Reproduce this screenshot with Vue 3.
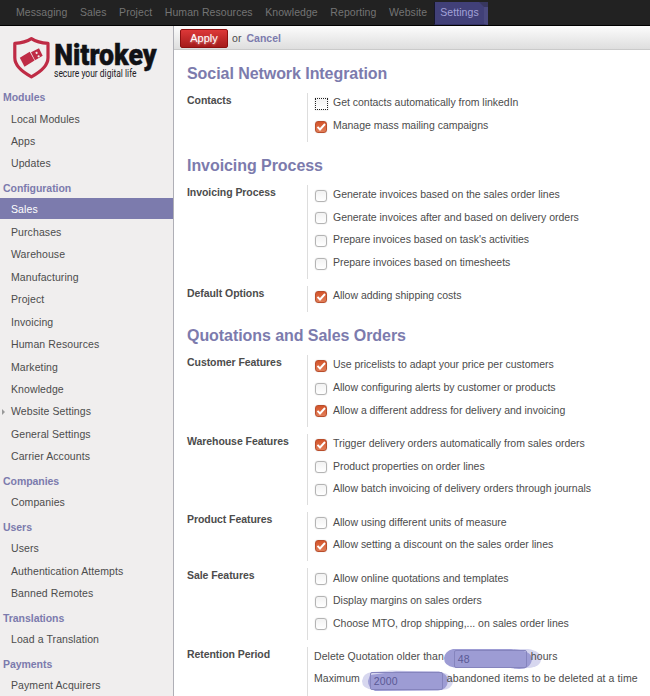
<script setup>
const topMenu = [
  { t: 'Messaging' }, { t: 'Sales' }, { t: 'Project' }, { t: 'Human Resources' },
  { t: 'Knowledge' }, { t: 'Reporting' }, { t: 'Website' },
]
const side = [
  { title: 'Modules', items: ['Local Modules', 'Apps', 'Updates'] },
  { title: 'Configuration', items: ['Sales', 'Purchases', 'Warehouse', 'Manufacturing', 'Project', 'Invoicing', 'Human Resources', 'Marketing', 'Knowledge', 'Website Settings', 'General Settings', 'Carrier Accounts'] },
  { title: 'Companies', items: ['Companies'] },
  { title: 'Users', items: ['Users', 'Authentication Attempts', 'Banned Remotes'] },
  { title: 'Translations', items: ['Load a Translation'] },
  { title: 'Payments', items: ['Payment Acquirers'] },
]
const sections = [
  { title: 'Social Network Integration', groups: [
    { label: 'Contacts', rows: [
      { t: 'Get contacts automatically from linkedIn', focus: true },
      { t: 'Manage mass mailing campaigns', on: true },
    ] },
  ] },
  { title: 'Invoicing Process', groups: [
    { label: 'Invoicing Process', rows: [
      { t: 'Generate invoices based on the sales order lines' },
      { t: 'Generate invoices after and based on delivery orders' },
      { t: "Prepare invoices based on task's activities" },
      { t: 'Prepare invoices based on timesheets' },
    ] },
    { label: 'Default Options', rows: [{ t: 'Allow adding shipping costs', on: true }] },
  ] },
  { title: 'Quotations and Sales Orders', groups: [
    { label: 'Customer Features', rows: [
      { t: 'Use pricelists to adapt your price per customers', on: true },
      { t: 'Allow configuring alerts by customer or products' },
      { t: 'Allow a different address for delivery and invoicing', on: true },
    ] },
    { label: 'Warehouse Features', rows: [
      { t: 'Trigger delivery orders automatically from sales orders', on: true },
      { t: 'Product properties on order lines' },
      { t: 'Allow batch invoicing of delivery orders through journals' },
    ] },
    { label: 'Product Features', rows: [
      { t: 'Allow using different units of measure' },
      { t: 'Allow setting a discount on the sales order lines', on: true },
    ] },
    { label: 'Sale Features', rows: [
      { t: 'Allow online quotations and templates' },
      { t: 'Display margins on sales orders' },
      { t: 'Choose MTO, drop shipping,... on sales order lines' },
    ] },
    { label: 'Retention Period', rows: [
      { pre: 'Delete Quotation older than', value: '48', post: 'hours', kind: 'hours' },
      { pre: 'Maximum', value: '2000', post: 'abandoned items to be deleted at a time', kind: 'items' },
    ] },
  ] },
]
</script>

<template>
  <div class="page">
    <nav class="topbar">
      <a v-for="m in topMenu" :key="m.t">{{ m.t }}</a>
      <a class="current">Settings
        <svg class="fold" width="9" height="5" viewBox="0 0 9 5"><path d="M0 0H9V5H5Z" fill="#38375f" /></svg>
      </a>
    </nav>
    <div class="body">
      <aside class="sidebar">
        <svg class="logo" width="173" height="61" viewBox="0 0 173 61">
          <path d="M31.400 12.600C26.500 15.800 20.500 17 14.800 17.400V31.800C14.800 39.800 22 45.800 31.400 50.800C40.800 45.800 48 39.800 48 31.800V17.400C42.300 17 36.300 15.800 31.400 12.600Z" fill="none" stroke="#bf2b45" stroke-width="3.200" stroke-linejoin="round" />
          <path d="M19.800 31.700L29.700 25.800L34.500 34.500L24.500 40.800Z" fill="#bf2b45" />
          <path fill-rule="evenodd" d="M31 26.300L39 22.300L42.700 29.800L35 34.200ZM35.300 26.500L37 25.600L37.900 27.300L36.200 28.200ZM37.300 29.900L39 29L39.900 30.500L38.200 31.400Z" fill="#bf2b45" />
          <text x="54.200" y="39" class="brand" textLength="102.500" lengthAdjust="spacingAndGlyphs">Nitrokey</text>
          <text x="54" y="50.700" class="slogan" textLength="82.500" lengthAdjust="spacingAndGlyphs">secure your digital life</text>
        </svg>
        <section v-for="s in side" :key="s.title">
          <h4>{{ s.title }}</h4>
          <div v-for="(i, n) in s.items" :key="i" class="item" :class="{ active: s.title === 'Configuration' && n === 0, parent: i === 'Website Settings' }"><span>{{ i }}</span></div>
        </section>
      </aside>
      <main>
        <header><button>Apply</button><span class="or">or</span><a>Cancel</a></header>
        <div class="form">
          <template v-for="s in sections" :key="s.title">
            <h2>{{ s.title }}</h2>
            <div class="groups">
              <div v-for="g in s.groups" :key="g.label" class="group">
                <div class="label">{{ g.label }}</div>
                <div class="rows">
                  <div v-for="r in g.rows" :key="r.t || r.pre" class="row">
                    <template v-if="r.pre">
                      <span class="pre">{{ r.pre }}</span>
                      <span class="field" :class="r.kind">
                        <svg v-if="r.kind === 'hours'" class="mark" width="98" height="22" viewBox="0 0 98 22">
                          <path d="M70 1H84Q97 3 97 11Q97 19 84 20L70 21Z" fill="#d7d7ef" />
                          <path d="M9 1H67Q88 2 88 11Q87 21 75 21L62 19.500H10Q0 18 0 10Q1 3 9 1Z" fill="#9d9cd4" />
                        </svg>
                        <svg v-else class="mark" width="92" height="22" viewBox="0 0 92 22">
                          <path d="M10 2L30 0.500L79 2Q91 5 91 12Q90 19 80 20H12Q0 19 0 11Q1 3 10 2Z" fill="#d7d7ef" />
                          <path d="M8 5L34 1.500H77Q86 4 86 11Q85 20 76 20.500L13 21Q6 18 6 11Z" fill="#9d9cd4" />
                        </svg>
                        <span class="box">{{ r.value }}</span>
                      </span>
                      <span class="post">{{ r.post }}</span>
                    </template>
                    <template v-else>
                      <span class="check" :class="{ on: r.on, focus: r.focus }">
                        <svg v-if="r.on" width="12" height="12" viewBox="0 0 12 12"><path d="M2.500 5.800L5 8.500L10 3" fill="none" stroke="#fff" stroke-width="1.900" /></svg>
                      </span>
                      <span class="txt">{{ r.t }}</span>
                    </template>
                  </div>
                </div>
              </div>
            </div>
          </template>
        </div>
      </main>
    </div>
  </div>
</template>

<style>
body { margin: 0; overflow: hidden; }
</style>
<style scoped>
* { box-sizing: border-box; }
.page { width: 650px; height: 696px; overflow: hidden; background: #fff; color: #4c4c4c; font: 10.5px/14px "Liberation Sans", Arial, sans-serif; letter-spacing: 0.090px; white-space: nowrap; display: flex; flex-direction: column; }
.topbar { height: 26px; flex: none; background: #222; border-bottom: 1px solid #000; display: flex; padding: 2px 0 0 16px; gap: 12.600px; color: #747474; line-height: 21px; letter-spacing: 0.060px; }
.current { position: relative; height: 23px; width: 54px; margin-left: -5.500px; padding-left: 5px; background: #414078; color: #a3a2d8; border-left: 1px solid #17172b; border-right: 4px solid #4b4a80; border-bottom: 1px solid #333264; }
.fold { position: absolute; right: -4px; top: 0; }
.body { display: flex; flex: 1; min-height: 0; }
.sidebar { width: 174px; flex: none; background: #f0eeee; border-right: 1px solid #afafb6; overflow: hidden; }
.logo { display: block; }
.brand { font: 900 30px Roboto, sans-serif; fill: #111216; stroke: #111216; stroke-width: 0.500px; letter-spacing: 0; }
.slogan { font: 11px Roboto, sans-serif; fill: #202024; letter-spacing: 0; }
h4 { margin: 0; height: 23.600px; padding: 3px 0 0 3px; font-size: 10.500px; line-height: 15px; letter-spacing: -0.050px; color: #7c7bad; }
.item { height: 22.450px; padding-left: 11px; line-height: 16px; position: relative; }
.active { color: #fff; }
.active::before { content: ""; position: absolute; left: 0; top: -3.600px; width: 173px; height: 21px; background: #7c7bad; }
.active span { position: relative; top: -0.600px; }
.parent::before { content: ""; position: absolute; left: 2px; top: 6px; border-left: 3px solid #999; border-top: 3px solid transparent; border-bottom: 3px solid transparent; }
main { flex: 1; min-width: 0; }
header { height: 24px; display: flex; align-items: center; background: linear-gradient(#fcfcfc, #dedede); border-bottom: 1px solid #cacaca; padding: 1px 0 0 6px; }
button { width: 48px; height: 19px; padding: 0; margin: 0; border: 1px solid #8d1010; border-radius: 2px; background: linear-gradient(#dd3838, #a51b1b); color: #fff; font: 11px "Liberation Sans", sans-serif; text-shadow: 0 1px 2px rgba(255, 255, 255, 0.5); }
.or { margin: 0 5px 0 4px; }
header a { color: #7c7bad; font-weight: bold; letter-spacing: 0; }
.form { padding-left: 13px; }
h2 { margin: 0; height: 43px; padding-top: 14px; font-size: 16px; line-height: 20px; letter-spacing: -0.060px; color: #7c7bad; }
.groups { display: flex; flex-direction: column; gap: 7.200px; }
.group { display: flex; }
.label { width: 120px; font-weight: bold; line-height: 15.400px; letter-spacing: -0.060px; }
.rows { border-left: 1px solid #ddd; padding: 0 0 3.600px 6px; }
.row { height: 22.600px; display: flex; line-height: 18.800px; }
.txt { letter-spacing: -0.020px; padding-top: 0.350px; }
.pre { letter-spacing: 0.050px; }
.check { width: 12px; height: 12px; margin: 5px 6px 0 1px; border: 1px solid #b4b4b4; border-radius: 3px; background: linear-gradient(#f2f2f2, #fff); box-shadow: 0 0 1px #bbb; flex: none; }
.check svg { display: block; margin: -1px; }
.on { border-color: #b94e2c; background: linear-gradient(#d4542a, #e17e59); }
.focus { width: 13px; margin-right: 5px; border: 1px dotted #222; border-radius: 0; }
.field { position: relative; height: 20px; }
.hours { width: 87px; }
.items { width: 87px; }
.mark { position: absolute; }
.hours .mark { left: 0; top: 1px; }
.items .mark { left: 2px; top: 1px; }
.box { position: absolute; top: 3px; width: 73px; height: 18px; padding-left: 3px; border: 1px solid #8584bd; border-radius: 2px; line-height: 17px; color: #5a5995; }
.hours .box { left: 10px; }
.items .box { left: 10px; }
.post { position: relative; }
</style>
